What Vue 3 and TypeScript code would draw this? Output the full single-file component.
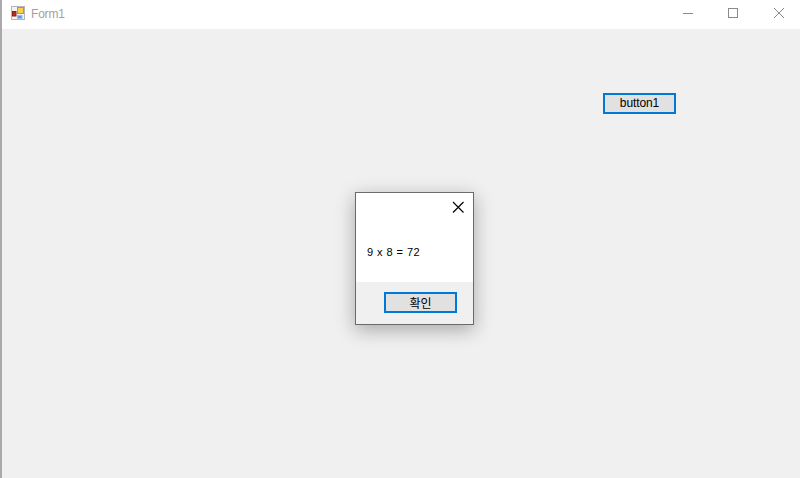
<template>
  <div class="window">
    <header class="titlebar">
      <svg class="app-icon" width="16" height="16" viewBox="0 0 16 16">
        <rect x="0.5" y="0.5" width="13" height="13" fill="#f4f4f4" stroke="#b5b5b5" />
        <rect x="1.5" y="5.5" width="3.5" height="4.5" fill="#c8281e" stroke="#8a1f16" />
        <rect x="6.5" y="1.5" width="6" height="6" fill="#fbd04a" stroke="#c49a1e" />
        <rect x="6.5" y="9.5" width="4.5" height="3" fill="#5b97e6" stroke="#9cc0ee" />
      </svg>
      <span class="title">Form1</span>
      <div class="controls">
        <svg width="12" height="12" viewBox="0 0 12 12">
          <path d="M0 6.5h10" stroke="#8a8a8a" fill="none" />
        </svg>
        <svg width="12" height="12" viewBox="0 0 12 12">
          <rect x="0.5" y="1.5" width="9" height="9" stroke="#8a8a8a" fill="none" />
        </svg>
        <svg width="12" height="12" viewBox="0 0 12 12">
          <path d="M1 1l10 10M11 1L1 11" stroke="#8a8a8a" fill="none" />
        </svg>
      </div>
    </header>
    <main class="client">
      <button class="win-btn form-btn" type="button">button1</button>
      <section class="dialog">
        <div class="dialog-body">
          <div class="dialog-top">
            <svg width="13" height="13" viewBox="0 0 13 13">
              <path d="M1 1l10.5 10.5M11.5 1L1 11.5" stroke="#000" stroke-width="1.15" fill="none" />
            </svg>
          </div>
          <p class="message">{{ a }} x {{ b }} = {{ a * b }}</p>
        </div>
        <footer class="dialog-footer">
          <button class="win-btn ok-btn" type="button">확인</button>
        </footer>
      </section>
    </main>
  </div>
</template>

<script setup lang="ts">
const a = 9
const b = 8
</script>

<style>
html,
body {
  margin: 0;
  overflow: hidden;
}
</style>

<style scoped>
.window {
  width: 800px;
  height: 478px;
  display: flex;
  flex-direction: column;
  box-sizing: border-box;
  border-left: 2px solid #aaaaaa;
  background: #fff;
  font-family: "Liberation Sans", "Noto Sans CJK KR", sans-serif;
  font-size: 12px;
  color: #000;
}

.titlebar {
  height: 29px;
  flex: none;
  display: flex;
  align-items: center;
  padding-left: 9px;
  background: #fff;
}

.app-icon {
  margin-right: 4px;
  margin-top: -2px;
}

.title {
  color: #a8a0a0;
  margin-top: -1px;
  letter-spacing: -0.2px;
}

.controls {
  margin-left: auto;
  display: flex;
  gap: 33px;
  padding-right: 15px;
  margin-top: -3px;
}

.controls svg {
  display: block;
}

.client {
  flex: 1;
  position: relative;
  background: #f0f0f0;
}

.win-btn {
  box-sizing: border-box;
  margin: 0;
  padding: 0 0 2px;
  border: 2px solid #0078d7;
  background: #e1e1e1;
  font: inherit;
  color: #000;
}

.form-btn {
  position: absolute;
  left: 601px;
  top: 64px;
  width: 73px;
  height: 21px;
  letter-spacing: -0.1px;
}

.dialog {
  position: absolute;
  left: 353px;
  top: 163px;
  width: 119px;
  height: 133px;
  box-sizing: border-box;
  display: flex;
  flex-direction: column;
  border: 1px solid #6a6a6a;
  background: #fff;
  box-shadow: 0 5px 18px rgba(0, 0, 0, 0.3);
}

.dialog-body {
  flex: 1;
  display: flex;
  flex-direction: column;
}

.dialog-top {
  display: flex;
  justify-content: flex-end;
  padding: 8px 8px 0 0;
}

.dialog-top svg {
  display: block;
}

.message {
  margin: 32px 0 0 11px;
  font-size: 11px;
  letter-spacing: 0.45px;
}

.dialog-footer {
  height: 42px;
  display: flex;
  justify-content: flex-end;
  align-items: flex-start;
  box-sizing: border-box;
  padding: 10px 16px 0 0;
  background: #f0f0f0;
}

.ok-btn {
  width: 73px;
  height: 21px;
}
</style>
